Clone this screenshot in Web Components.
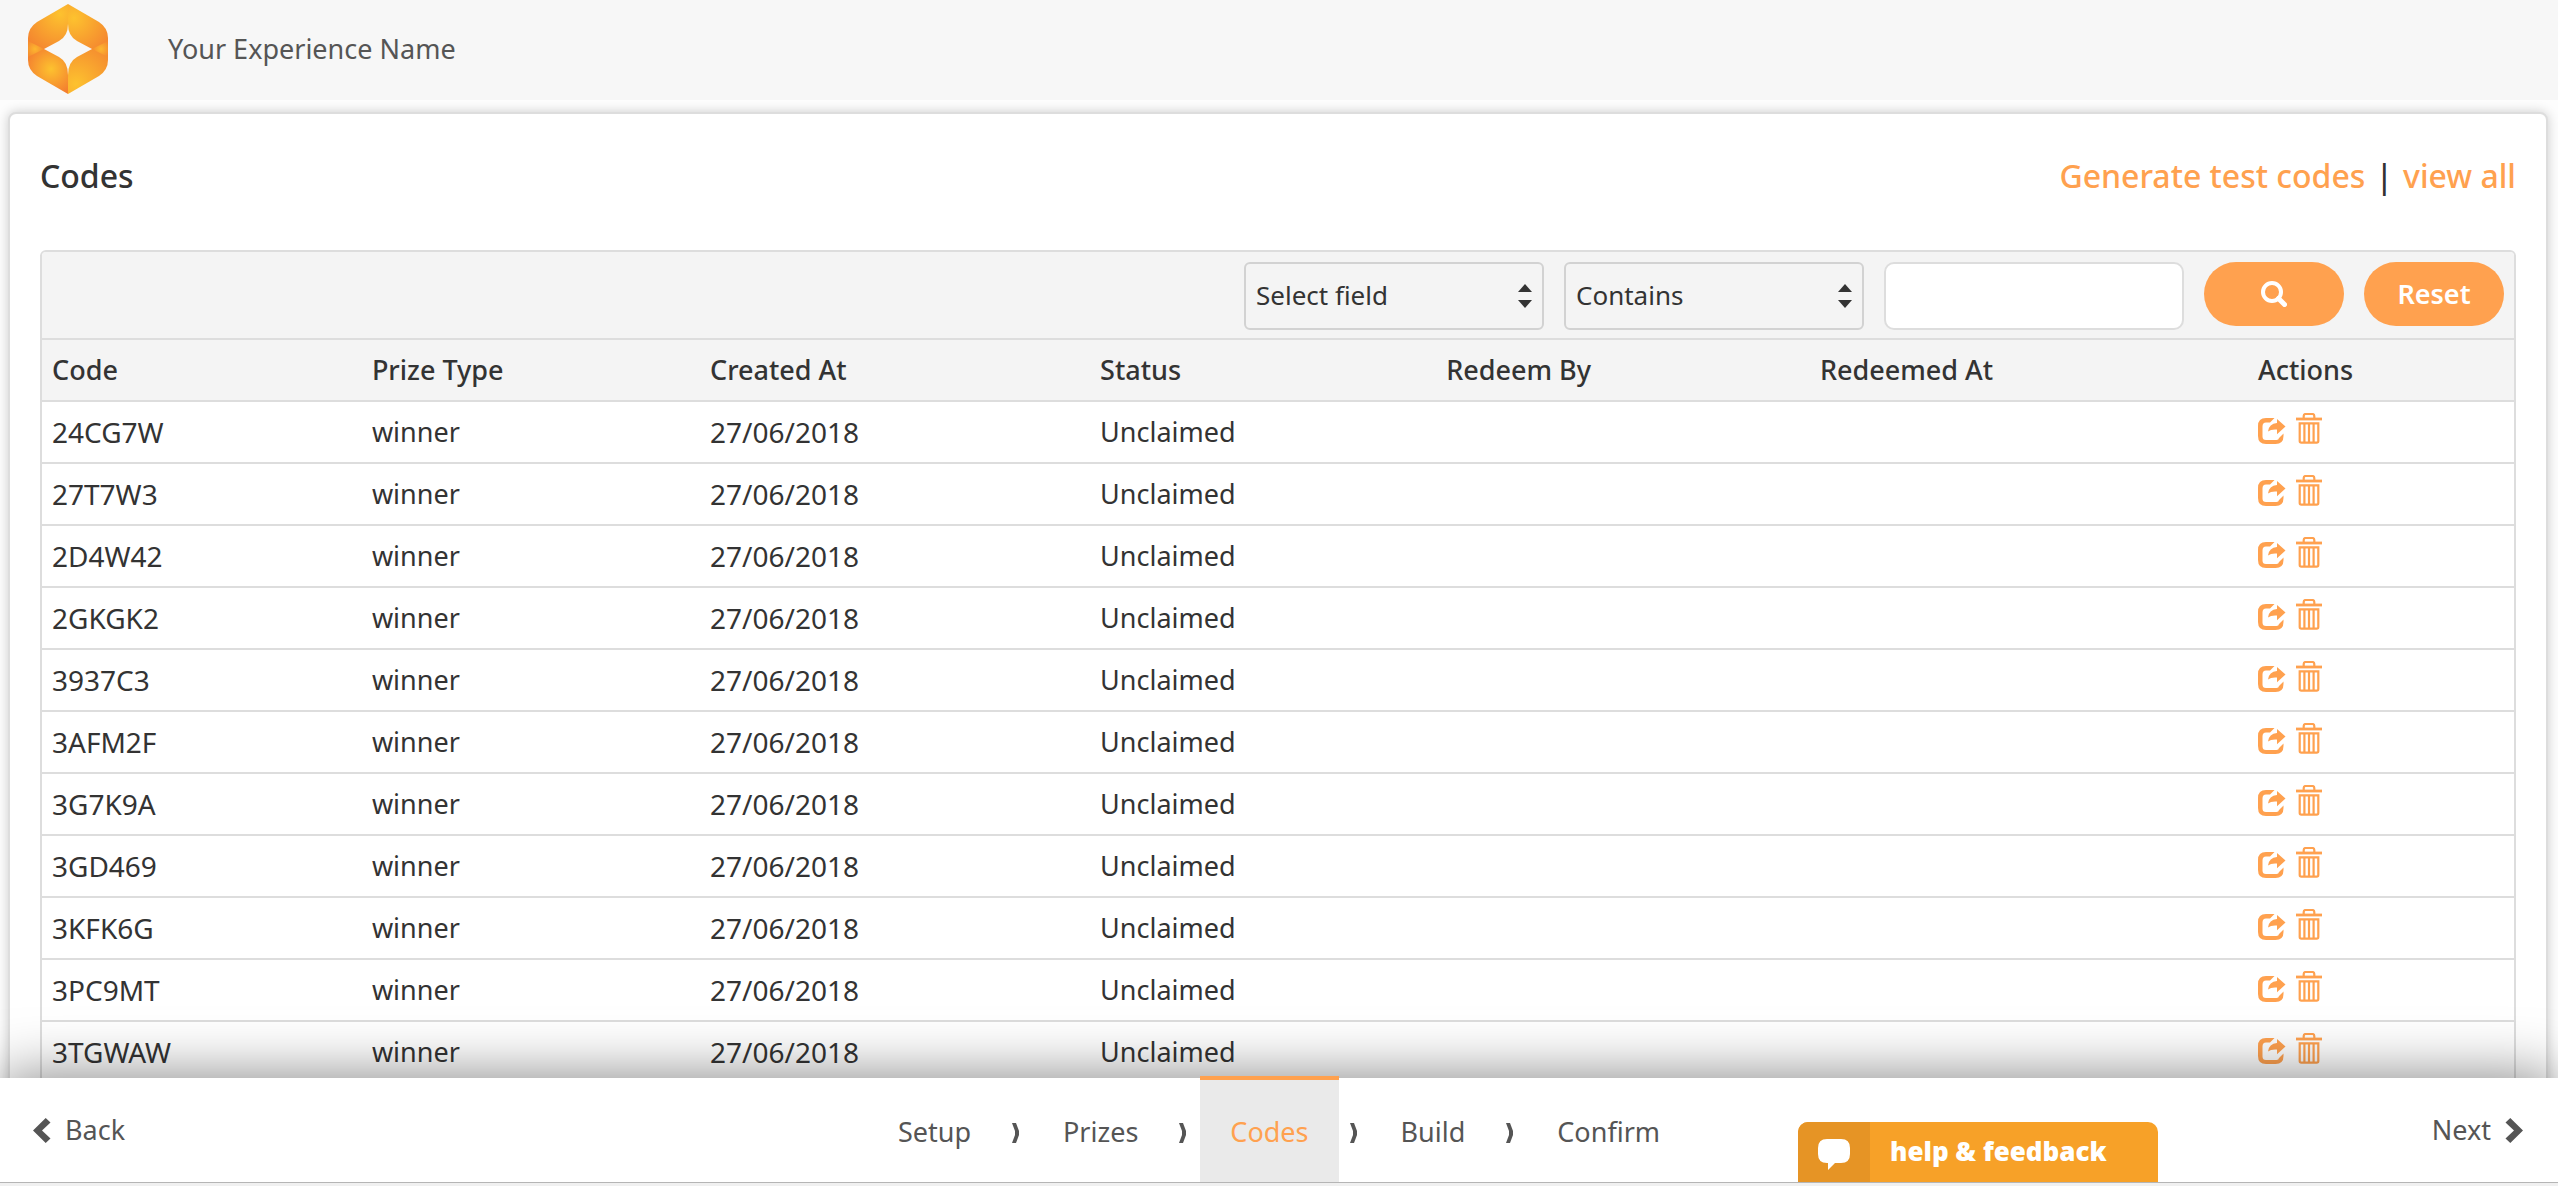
<!DOCTYPE html>
<html lang="en">
<head>
<meta charset="utf-8">
<title>Codes</title>
<style>
  :root {
    --accent: #ffa14f;
    --line: #dddddd;
    --panel: #f4f4f4;
    --ink: #333333;
    --muted: #555555;
  }
  html, body { height: 100%; }
  body {
    margin: 0;
    font: 27px/36px "Noto Sans", "Open Sans", sans-serif;
    color: var(--ink);
    background: #fdfdfd;
  }
</style>
</head>
<body>
<wizard-app>
  <app-header slot="header">Your Experience Name</app-header>
  <codes-card>
    <span slot="title">Codes</span>
    <card-links slot="links"></card-links>
    <filter-bar></filter-bar>
    <codes-table></codes-table>
  </codes-card>
  <wizard-nav slot="footer" current="Codes"></wizard-nav>
</wizard-app>

<script>
const define = (name, html, setup) => {
  const template = document.createElement('template');
  template.innerHTML = html;
  customElements.define(name, class extends HTMLElement {
    constructor() {
      super();
      this.attachShadow({ mode: 'open' }).append(template.content.cloneNode(true));
    }
    connectedCallback() {
      if (setup && !this.ready) { this.ready = true; setup(this, this.shadowRoot); }
    }
  });
};

define('wizard-app', `
  <style>
    :host { display: flex; flex-direction: column; height: 100vh; overflow: hidden; }
    main { flex: 1; min-height: 0; overflow: hidden; padding: 12px 10px 0 8px; }
  </style>
  <slot name="header"></slot>
  <main><slot></slot></main>
  <slot name="footer"></slot>`);

define('brand-logo', `
  <style>:host { display: block; } svg { display: block; width: 80px; height: 90px; }</style>
  <svg viewBox="0 0 80 90" role="img" aria-label="Home">
    <defs>
      <radialGradient id="a" gradientUnits="userSpaceOnUse" cx="32" cy="10" r="42"><stop offset="0" stop-color="#fdc22f"/><stop offset="1" stop-color="#f4842f"/></radialGradient>
      <radialGradient id="b" gradientUnits="userSpaceOnUse" cx="46" cy="14" r="44"><stop offset="0" stop-color="#fdc22f"/><stop offset="1" stop-color="#f4822f"/></radialGradient>
      <radialGradient id="c" gradientUnits="userSpaceOnUse" cx="23" cy="65" r="26"><stop offset="0" stop-color="#fdc22f"/><stop offset="1" stop-color="#f4802f"/></radialGradient>
      <radialGradient id="d" gradientUnits="userSpaceOnUse" cx="48" cy="80" r="46"><stop offset="0" stop-color="#fdc22f"/><stop offset="1" stop-color="#f4882f"/></radialGradient>
      <radialGradient id="e" gradientUnits="userSpaceOnUse" cx="7" cy="45" r="9"><stop offset="0" stop-color="#fdb72f"/><stop offset="1" stop-color="#f58c2f"/></radialGradient>
      <radialGradient id="f" gradientUnits="userSpaceOnUse" cx="73" cy="45" r="9"><stop offset="0" stop-color="#fdb72f"/><stop offset="1" stop-color="#f58c2f"/></radialGradient>
    </defs>
    <path fill="url(#a)" d="M40 0L9 18Q0 24 0 34V45H16L31 37Q40 32 40 20Z"/>
    <path fill="url(#b)" d="M40 0L71 18Q80 24 80 34V45H64L49 37Q40 32 40 20Z"/>
    <path fill="url(#c)" d="M40 90L9 72Q0 66 0 56V45H16L31 53Q40 58 40 71Z"/>
    <path fill="url(#d)" d="M40 90L71 72Q80 66 80 56V45H64L49 53Q40 58 40 71Z"/>
    <path fill="url(#e)" d="M0 37L16 45L0 53Z"/>
    <path fill="url(#f)" d="M80 37L64 45L80 53Z"/>
  </svg>`);

define('app-header', `
  <style>
    :host { display: block; background: #f7f7f7; color: var(--muted); }
    header { display: flex; align-items: center; gap: 60px; height: 98px; padding: 0 28px 2px; }
  </style>
  <header><brand-logo></brand-logo><span><slot></slot></span></header>`);

define('codes-card', `
  <style>
    :host { display: block; background: #fff; border: 2px solid var(--line); border-radius: 8px;
      box-shadow: 0 0 12px rgba(0,0,0,.2); padding: 0 30px 40px; }
    .head { display: flex; justify-content: space-between; align-items: center; height: 124px; margin-bottom: 12px; }
    h1 { margin: 0; font-size: 32px; font-weight: 500; }
    .grid { border: 2px solid var(--line); border-radius: 6px 6px 0 0; }
  </style>
  <div class="head"><h1><slot name="title"></slot></h1><slot name="links"></slot></div>
  <div class="grid"><slot></slot></div>`);

define('card-links', `
  <style>
    :host { display: flex; gap: 10px; font-size: 32px; font-weight: 500; }
    a { color: var(--accent); text-decoration: none; }
  </style>
  <a href="#generate">Generate test codes</a><span>|</span><a href="#all">view all</a>`);

define('filter-bar', `
  <style>
    :host { display: block; background: var(--panel); border-radius: 4px 4px 0 0; }
    form { display: flex; justify-content: flex-end; gap: 20px; padding: 10px 10px 8px; margin: 0; }
    .pick { display: grid; }
    .pick > * { grid-area: 1 / 1; }
    .pick svg { width: 14px; height: 24px; align-self: center; justify-self: end; margin-right: 12px; pointer-events: none; }
    select, input { box-sizing: border-box; width: 300px; height: 68px; margin: 0; font: inherit; font-size: 26px; color: inherit; }
    select { appearance: none; border: 2px solid #d2d2d2; border-radius: 6px; background: transparent; padding: 0 40px 2px 10px; }
    input { border: 2px solid var(--line); border-radius: 10px; background: #fff; padding: 0 12px; }
    button { display: flex; align-items: center; justify-content: center; width: 140px; height: 64px; border: 0;
      border-radius: 32px; padding: 0; background: var(--accent); color: #fff; font: inherit; font-weight: 600; }
  </style>
  <form>
    <div class="pick">
      <select aria-label="Field"><option>Select field</option></select>
      <svg viewBox="0 0 14 24" fill="#333"><path d="M0 8L7 0l7 8zM0 16h14l-7 8z"/></svg>
    </div>
    <div class="pick">
      <select aria-label="Condition"><option>Contains</option></select>
      <svg viewBox="0 0 14 24" fill="#333"><path d="M0 8L7 0l7 8zM0 16h14l-7 8z"/></svg>
    </div>
    <input type="text" aria-label="Search text">
    <button type="button" aria-label="Search">
      <svg width="26" height="26" viewBox="0 0 26 26" fill="none" stroke="#fff" stroke-width="4">
        <circle cx="11" cy="11" r="9"/><path d="M17.500 17.500l6 6" stroke-width="5" stroke-linecap="round"/>
      </svg>
    </button>
    <button type="reset">Reset</button>
  </form>`);

define('row-actions', `
  <style>
    :host { display: flex; align-items: flex-end; gap: 10px; }
    button { display: block; border: 0; padding: 0; background: none; color: var(--accent); }
    svg { display: block; }
  </style>
  <button type="button" aria-label="Share">
    <svg width="28" height="26" viewBox="0 0 28 26" fill="currentColor">
      <path d="M16.500 0H8Q0 0 0 8v10q0 8 8 8h9.500q8 0 8-8v-2.500l-4.500 4.500q-.3 2-2.500 2H8q-3.500 0-3.500-3.500V8.500Q4.500 4.500 8 4.500h4z"/>
      <path d="M19 1l8.500 7.500L19 16.300V11.500Q13 11 10 13.500Q11 5.500 19 5z"/>
    </svg>
  </button>
  <button type="button" aria-label="Delete">
    <svg width="26" height="31" viewBox="0 0 26 31" fill="none" stroke="currentColor" stroke-width="2.200">
      <path d="M0 6h26" stroke-width="2.800"/>
      <path d="M7.700 6V3q0-2 2-2h6.600q2 0 2 2v3"/>
      <path d="M3.700 10.300h18.600V28q0 1.700-1.700 1.700H5.400q-1.700 0-1.700-1.700zM8.400 10v19M13 10v19M17.600 10v19"/>
    </svg>
  </button>`);

define('codes-table', `
  <style>
    :host { display: block; }
    table { width: 100%; table-layout: fixed; border-collapse: separate; border-spacing: 0; }
    th, td { box-sizing: border-box; height: 62px; padding: 0 10px; border-top: 2px solid var(--line); text-align: left; }
    th { font-weight: 500; background: var(--panel); }
    td { background: #fff; }
    .num { font-size: 28px; }
    td:last-child { padding-bottom: 8px; }
    .c1 { width: 12.94%; } .c2 { width: 13.68%; } .c3 { width: 15.78%; } .c4 { width: 14%; }
    .c5 { width: 15.12%; } .c6 { width: 17.72%; }
  </style>
  <table>
    <colgroup><col class="c1"><col class="c2"><col class="c3"><col class="c4"><col class="c5"><col class="c6"><col></colgroup>
    <thead><tr><th>Code</th><th>Prize Type</th><th>Created At</th><th>Status</th><th>Redeem By</th><th>Redeemed At</th><th>Actions</th></tr></thead>
    <tbody></tbody>
  </table>`, (host, root) => {
  const codes = ['24CG7W', '27T7W3', '2D4W42', '2GKGK2', '3937C3', '3AFM2F', '3G7K9A', '3GD469', '3KFK6G', '3PC9MT', '3TGWAW'];
  root.querySelector('tbody').innerHTML = codes.map(code =>
    `<tr><td class="num">${code}</td><td>winner</td><td class="num">27/06/2018</td><td>Unclaimed</td><td></td><td></td><td><row-actions></row-actions></td></tr>`).join('');
});

define('help-tab', `
  <style>
    :host { display: block; }
    button { display: flex; align-items: stretch; width: 360px; height: 60px; border: 0; padding: 0; overflow: hidden;
      border-radius: 10px 10px 0 0; background: #f7a128; color: #fff; font: 800 26px/58px "Open Sans", "Noto Sans", sans-serif; }
    .icon { display: flex; align-items: center; justify-content: center; width: 72px; background: #e69425; }
    .label { padding-left: 20px; }
    svg { margin-top: 4px; }
  </style>
  <button type="button">
    <span class="icon"><svg width="32" height="31" viewBox="0 0 32 31" fill="#fff"><path d="M9 0h14q9 0 9 9v6q0 9-9 9h-6l-7 7v-7H9q-9 0-9-9V9q0-9 9-9z"/></svg></span>
    <span class="label">help &amp; feedback</span>
  </button>`);

define('wizard-nav', `
  <style>
    :host { display: block; position: relative; z-index: 1; color: var(--muted); background: #f0f0f0;
      box-shadow: 0 0 60px rgba(0,0,0,.5); padding-bottom: 3px; }
    .bar { display: grid; grid-template-columns: 1fr auto 1fr; height: 104px; background: #fff; border-bottom: 1px solid #b5b5b5; }
    a { color: inherit; text-decoration: none; }
    .end { display: flex; align-items: center; gap: 14px; padding: 0 35px 0 33px; }
    .next { justify-self: end; }
    ol { display: flex; margin: -2px 0 0; padding: 0; list-style: none; }
    li { display: flex; }
    li a { display: flex; align-items: center; padding: 2px 30px 0; border-top: 4px solid transparent; }
    a[aria-current] { color: var(--accent); background: #eaeaea; border-top-color: var(--accent); }
    .sep { box-sizing: border-box; width: 32px; height: 20px; padding-left: 11px; align-self: center; margin-top: 8px; }
    .sep svg { display: block; }
    help-tab { position: absolute; right: 400px; bottom: 4px; }
  </style>
  <div class="bar">
    <a class="end" href="#back"><svg width="18" height="25" viewBox="0 0 18 25" fill="#555"><path d="M0 12.500L12.700 0l4.800 4.500-8.500 8 8.500 8-4.800 4.500z"/></svg>Back</a>
    <ol></ol>
    <a class="end next" href="#next">Next<svg width="18" height="25" viewBox="0 0 18 25" fill="#555"><path d="M18 12.500L5.300 0 .5 4.500l8.500 8-8.500 8L5.300 25z"/></svg></a>
  </div>
  <help-tab></help-tab>`, (host, root) => {
  const current = host.getAttribute('current');
  root.querySelector('ol').innerHTML = ['Setup', 'Prizes', 'Codes', 'Build', 'Confirm'].map(step =>
    `<li><a href="#${step.toLowerCase()}"${step === current ? ' aria-current="step"' : ''}>${step}</a></li>`)
    .join('<li class="sep" aria-hidden="true"><svg width="7" height="20" viewBox="0 0 7 20" fill="#555"><path d="M0 0h4l3 8v4l-3 8H0l3-8V8z"/></svg></li>');
});
</script>
</body>
</html>
